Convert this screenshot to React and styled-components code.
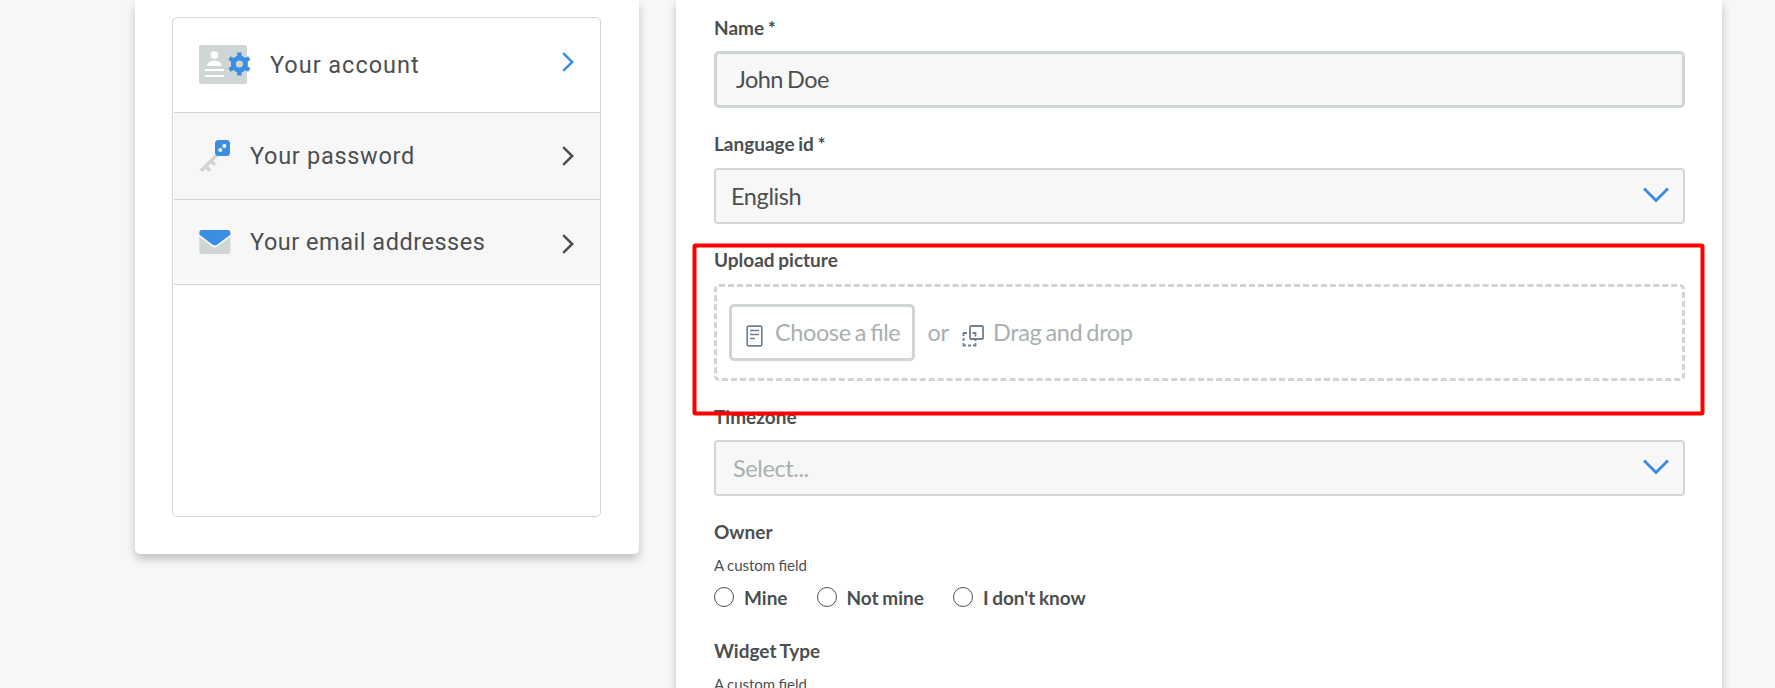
import React from "react";
import styled, { createGlobalStyle } from "styled-components";

const GlobalStyle = createGlobalStyle`
  * { box-sizing: border-box; }
  body {
    margin: 0;
    background: #f7f7f7;
    color: #4c4f50;
    font-family: Lato, "Liberation Sans", sans-serif;
    overflow: hidden;
  }
`;

const Page = styled.div`
  position: relative;
  display: flex;
  align-items: flex-start;
  gap: 37px;
  height: 688px;
  padding-left: 135px;
  overflow: hidden;
`;

const Card = styled.section`
  width: ${(p) => p.$width}px;
  height: ${(p) => p.$height}px;
  flex: none;
  background: #fff;
  border-radius: 0 0 5px 5px;
  box-shadow: 0 5px 10px rgba(0, 0, 0, 0.22);
`;

const MenuCard = styled(Card)`
  padding: 17px 38px 37px 37px;
`;

const Menu = styled.nav`
  height: 500px;
  padding: 0 0 0 1px;
  border: 1px solid #d0d5d5;
  border-radius: 5px;
`;

const MenuItem = styled.a`
  display: flex;
  align-items: center;
  height: ${(p) => p.$height}px;
  padding: 0 26px 0 25px;
  border-bottom: 1px solid #d0d5d5;
  background: ${(p) => (p.$active ? "transparent" : "#f7f7f7")};
  color: ${(p) => (p.$active ? "#3b8ee2" : "#4c4f50")};
`;

const MenuLabel = styled.span`
  flex: 1;
  margin-left: 19px;
  color: #4c4f50;
  font: 400 23.5px/28px Roboto, "Liberation Sans", sans-serif;
  letter-spacing: ${(p) => p.$tracking}px;
`;

const FormCard = styled(Card)`
  padding: 15px 37px 0 38px;
`;

const Label = styled.div`
  height: 26px;
  font-size: 19px;
  font-weight: 700;
  line-height: ${(p) => (p.$raised ? 24 : 26)}px;
  word-spacing: -1px;
`;

const Field = styled.div`
  height: ${(p) => p.$height}px;
  display: flex;
  flex-direction: column;
  gap: ${(p) => p.$gap || 10}px;
`;

const TextInput = styled.input`
  width: 100%;
  height: 57px;
  padding: 0 20px 2px 19px;
  border: 3px solid #d0d5d5;
  border-radius: 5px;
  background: #f7f7f7;
  color: #4c4f50;
  font: 400 23.5px Lato, sans-serif;
  letter-spacing: -0.6px;
  word-spacing: -1px;
  outline: none;
`;

const SelectBox = styled.div`
  display: flex;
  align-items: center;
  justify-content: space-between;
  height: 56px;
  padding: 0 14px 0 ${(p) => (p.$placeholder ? 17 : 15)}px;
  border: 2px solid #d0d5d5;
  border-radius: 4px;
  background: #f7f7f7;
  color: ${(p) => (p.$placeholder ? "#a9b0b0" : "#4c4f50")};
  font-size: 23.5px;
  letter-spacing: -0.4px;
`;

const DropZone = styled.div`
  display: flex;
  align-items: center;
  height: 97px;
  padding: 0 12px;
  border: 3px dashed #d0d5d5;
  border-radius: 5px;
  color: #a9b0b0;
  font-size: 23.5px;
  line-height: 30px;
  letter-spacing: -0.4px;
  word-spacing: -1.5px;
  font-feature-settings: "liga" 1;
`;

const FileButton = styled.button`
  display: flex;
  align-items: center;
  gap: 12px;
  width: 186px;
  height: 57px;
  margin-right: 12.5px;
  padding: 0 0 2px 14px;
  border: 3px solid #d0d5d5;
  border-radius: 5px;
  background: #fff;
  color: inherit;
  font: inherit;
  font-feature-settings: inherit;
  letter-spacing: inherit;
  word-spacing: inherit;
  white-space: nowrap;
`;

const DropText = styled.span`
  display: flex;
  align-items: center;
  gap: 13px;
  padding-bottom: 2px;
`;

const DragHint = styled.span`
  display: flex;
  align-items: center;
  gap: 9.5px;
`;

const Hint = styled.div`
  height: 20px;
  font-size: 15px;
  line-height: 18px;
  word-spacing: -0.5px;
`;

const Radios = styled.div`
  display: flex;
  gap: 29px;
`;

const RadioOption = styled.label`
  display: flex;
  align-items: center;
  gap: 10px;
  font-size: 19px;
  font-weight: 700;
  line-height: 20px;
  word-spacing: -1px;
`;

const RadioText = styled.span`
  height: 20px;
  line-height: 22px;
`;

const RadioDot = styled.span`
  width: 20px;
  height: 20px;
  border: 1px solid #4c4f50;
  border-radius: 50%;
  background: #fff;
`;

const Highlight = styled.svg`
  position: absolute;
  left: 692px;
  top: 243px;
  pointer-events: none;
`;

const Svg = styled.svg`
  display: block;
  flex: none;
  position: relative;
  top: ${(p) => p.$shift || 0}px;
`;

const AccountIcon = () => (
  <Svg width="52" height="40" viewBox="0 0 52 40">
    <rect width="48" height="39" rx="2" fill="#d0d5d5" />
    <circle cx="15.3" cy="10" r="3.8" fill="#fff" />
    <path d="M8 21a7.3 5.6 0 0 1 14.6 0z" fill="#fff" />
    <path d="M6 25h19M6 31h19" stroke="#fff" strokeWidth="2" />
    <g stroke="#3b8ee2" strokeWidth="4.4">
      <path d="M40.4 7.5v23M30.5 13.2l19.8 11.6M30.5 24.8l19.8-11.6" />
    </g>
    <circle cx="40.4" cy="19" r="8.6" fill="#3b8ee2" />
    <circle cx="40.4" cy="19" r="3.6" fill="#d0d5d5" />
  </Svg>
);

const KeyIcon = () => (
  <Svg width="32" height="33" viewBox="0 0 32 33">
    <path d="M18 15L2 31M7 26l4 5M12 21l4 4" stroke="#d0d5d5" strokeWidth="3.6" fill="none" />
    <rect x="16" y="0" width="15" height="16" rx="3.5" fill="#3b8ee2" />
    <circle cx="25.3" cy="6" r="2" fill="#fff" />
    <circle cx="21.3" cy="10" r="2" fill="#fff" />
  </Svg>
);

const MailIcon = () => (
  <Svg width="32" height="24" viewBox="0 0 32 24">
    <path d="M.4 7l13 9.7q2.4 1.8 4.8 0L31.4 7v14.5a2.5 2.5 0 0 1-2.5 2.5h-26a2.5 2.5 0 0 1-2.5-2.5z" fill="#d0d5d5" />
    <path d="M3 0h26q2.4 0 2.4 2.4v2.3L18 14.7q-2.2 1.6-4.3 0L.4 4.7V2.4Q.4 0 3 0z" fill="#3b8ee2" />
  </Svg>
);

const ChevronRight = ({ shift }) => (
  <Svg $shift={shift} width="12" height="20" viewBox="0 0 12 20">
    <path d="M1.2 1.2l9 8.8-9 8.8" fill="none" stroke="currentColor" strokeWidth="2.5" />
  </Svg>
);

const ChevronDown = () => (
  <Svg $shift={-1} width="26" height="16" viewBox="0 0 26 16">
    <path d="M1 1.5l12 12 12-12" fill="none" stroke="#3b8ee2" strokeWidth="3" />
  </Svg>
);

const FileIcon = () => (
  <Svg $shift={4} width="17" height="22" viewBox="0 0 17 22" fill="none" stroke="#708090" strokeWidth="1.7">
    <rect x="1.2" y="1.2" width="14.6" height="19.6" rx="1.2" />
    <path d="M4 5.5h9M4 9.5h9M4 13.5h5" />
  </Svg>
);

const DragIcon = () => (
  <Svg $shift={4} width="22" height="22" viewBox="0 0 22 22" fill="none" stroke="#708090" strokeWidth="1.8">
    <rect x="8" y="1" width="13" height="13" rx="1" />
    <path d="M5 8H1.5v3M1.5 13v3M1.5 18v2.5H4M6 20.5h3M11 20.5h2.5V18M13.5 16v-1.5M13.5 11.5V8h-3" />
  </Svg>
);

const menu = [
  { label: "Your account", Icon: AccountIcon, height: 95, tracking: 0.97, active: true, shift: -3 },
  { label: "Your password", Icon: KeyIcon, height: 87, tracking: 0.7, shift: 0 },
  { label: "Your email addresses", Icon: MailIcon, height: 85, tracking: 0.52, shift: 2 },
];

export default function App() {
  return (
    <>
      <GlobalStyle />
      <Page>
        <MenuCard $width={504} $height={554}>
          <Menu>
            {menu.map(({ label, Icon, height, tracking, active, shift }) => (
              <MenuItem key={label} $height={height} $active={active}>
                <Icon />
                <MenuLabel $tracking={tracking}>{label}</MenuLabel>
                <ChevronRight shift={shift} />
              </MenuItem>
            ))}
          </Menu>
        </MenuCard>
        <FormCard $width={1046} $height={760}>
          <Field $height={117}>
            <Label>Name *</Label>
            <TextInput defaultValue="John Doe" />
          </Field>
          <Field $height={116}>
            <Label $raised>Language id *</Label>
            <SelectBox>
              English
              <ChevronDown />
            </SelectBox>
          </Field>
          <Field $height={156}>
            <Label $raised>Upload picture</Label>
            <DropZone>
              <FileButton>
                <FileIcon />
                Choose a file
              </FileButton>
              <DropText>
                or
                <DragHint>
                  <DragIcon />
                  Drag and drop
                </DragHint>
              </DropText>
            </DropZone>
          </Field>
          <Field $height={115}>
            <Label>Timezone</Label>
            <SelectBox $placeholder>
              Select...
              <ChevronDown />
            </SelectBox>
          </Field>
          <Field $height={119} $gap={11}>
            <Label>Owner</Label>
            <Hint>A custom field</Hint>
            <Radios>
              {["Mine", "Not mine", "I don't know"].map((name) => (
                <RadioOption key={name}>
                  <RadioDot />
                  <RadioText>{name}</RadioText>
                </RadioOption>
              ))}
            </Radios>
          </Field>
          <Field $height={100} $gap={11}>
            <Label>Widget Type</Label>
            <Hint>A custom field</Hint>
          </Field>
        </FormCard>
        <Highlight width="1013" height="173" viewBox="0 0 1013 173">
          <rect x="2.5" y="2.5" width="1008" height="168" rx="1" fill="none" stroke="#ff0000" strokeWidth="4" />
        </Highlight>
      </Page>
    </>
  );
}
